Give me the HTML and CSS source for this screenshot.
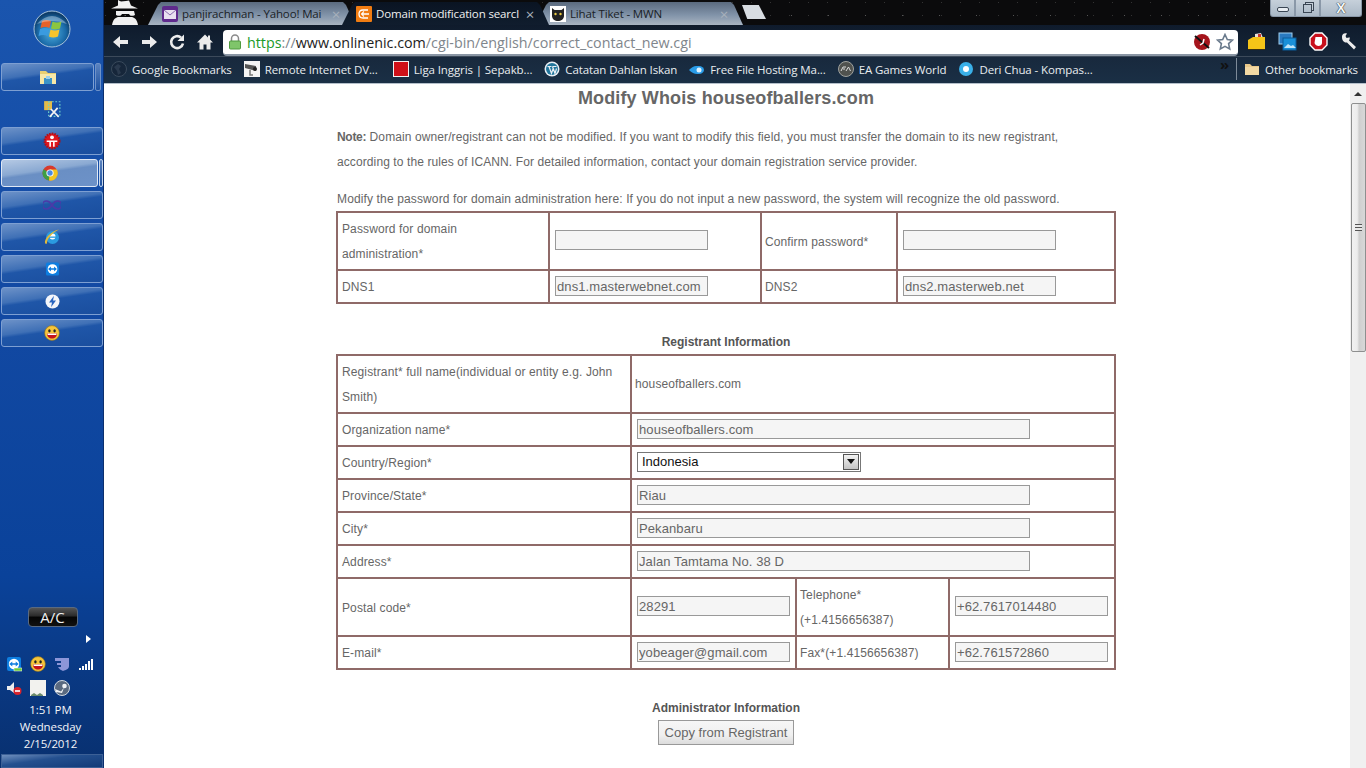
FILE: index.html
```html
<!DOCTYPE html>
<html>
<head>
	<meta charset="UTF-8">
	<title>Lihat Tiket - MWN</title>
	<link rel="stylesheet" href="styles.css">
</head>
<body>
<svg class="defs" width="0" height="0">
	<symbol id="smiley" viewBox="0 0 16 16">
		<circle cx="8" cy="8" r="7.400" fill="#f5c53a" stroke="#8a6a20" stroke-width=".6"/>
		<ellipse cx="5.400" cy="5.800" rx="1.200" ry="1.600" fill="#222"/>
		<ellipse cx="10.600" cy="5.800" rx="1.200" ry="1.600" fill="#222"/>
		<path d="M3 8.600h10c0 3.200-2.200 5-5 5s-5-1.800-5-5z" fill="#c4121c"/>
		<path d="M3.400 8.600h9.200l-.3 1.300H3.700z" fill="#fff"/>
	</symbol>
	<symbol id="teamviewer" viewBox="0 0 16 16">
		<rect x="1" y="1" width="14" height="14" rx="2" fill="#0e7ee0"/>
		<circle cx="8" cy="8" r="5.200" fill="#fff"/>
		<path d="M3.300 8l3-2.600v1.800h3.400V5.400l3 2.600-3 2.600V8.800H6.300v1.800z" fill="#0e7ee0"/>
	</symbol>
</svg>
<div class="desktop">

	<aside class="taskbar">
		<div class="orb">
			<svg width="38" height="38" viewBox="0 0 38 38">
				<defs>
					<radialGradient id="orbfill" cx="50%" cy="60%" r="55%">
						<stop offset="0" stop-color="#4fb0e0"/>
						<stop offset=".7" stop-color="#1a6aa8"/>
						<stop offset="1" stop-color="#0d3c68"/>
					</radialGradient>
				</defs>
				<circle cx="19" cy="19" r="18" fill="url(#orbfill)" stroke="#a9c4dc" stroke-width="1"/>
				<path d="M9 11q4-2 9 0l-1.500 7q-4-2-9 0z" fill="#e8622a"/>
				<path d="M19.500 11.500q4 2 9 0l-1.500 7q-5 2-9 0z" fill="#8cc63f"/>
				<path d="M7 19q4-2 9 0l-1.500 7q-4-2-9 0z" fill="#3a9be0"/>
				<path d="M17.500 19.500q4 2 9 0l-1.500 7q-5 2-9 0z" fill="#f7c42c"/>
				<path d="M4 14Q19-2 34 14 19 8 4 14z" fill="#fff" opacity=".35"/>
			</svg>
		</div>

		<ul class="launch">
			<li class="task open">
				<span class="task-face">
					<svg width="18" height="18" viewBox="0 0 18 18"><path d="M1 3h6l2 2h8v11H1z" fill="#e8cf72"/><rect x="1" y="6" width="16" height="10" fill="#f7e8a8"/><rect x="5" y="10" width="8" height="6" fill="#3b93c8"/><rect x="7" y="8" width="4" height="3" fill="#9ed0ea"/></svg>
				</span>
				<span class="task-sliver"></span>
			</li>
			<li class="task bare">
				<span class="task-face">
					<svg width="18" height="18" viewBox="0 0 16 16"><rect x="1" y="1" width="7" height="8" fill="#e2bc4a"/><rect x="5" y="1.500" width="10" height="13" fill="none" stroke="#6fd0c8" stroke-dasharray="1.500 1.500"/><path d="M6 15l7-8M14 15L7 8" stroke="#f2f2f2" stroke-width="1.500"/></svg>
				</span>
			</li>
			<li class="task">
				<span class="task-face">
					<svg width="18" height="18" viewBox="0 0 17 17"><circle cx="8.500" cy="8.500" r="7" fill="#e01820" stroke="#b01018" stroke-dasharray="1.500 1" stroke-width="2"/><circle cx="8.500" cy="5" r="1.800" fill="#fff"/><path d="M3.500 8h10v1.500h-2.500V14H9.500V9.500h-2V14H6V9.500H3.500z" fill="#fff"/></svg>
				</span>
			</li>
			<li class="task open active">
				<span class="task-face">
					<svg width="16" height="16" viewBox="0 0 16 16"><circle cx="8" cy="8" r="7.500" fill="#d8392c"/><path d="M8 8L1.500 4.200A7.500 7.500 0 0 0 7 15.400z" fill="#3e9e45"/><path d="M8 4.500h6.800a7.500 7.500 0 0 1-7.800 11z" fill="#f3c521"/><circle cx="8" cy="8" r="3.600" fill="#fff"/><circle cx="8" cy="8" r="2.700" fill="#4a8ae0"/></svg>
				</span>
				<span class="task-sliver"></span>
			</li>
			<li class="task">
				<span class="task-face">
					<svg width="18" height="10" viewBox="0 0 18 10"><path d="M9 5C7 2 5 1 3.500 1a4 4 0 0 0 0 8C5 9 7 8 9 5c2-3 4-4 5.500-4a4 4 0 0 1 0 8C13 9 11 8 9 5z" fill="none" stroke="#4a3aa8" stroke-width="1.600"/></svg>
				</span>
			</li>
			<li class="task">
				<span class="task-face">
					<svg width="18" height="18" viewBox="0 0 18 18"><circle cx="9.500" cy="9.500" r="6.500" fill="#2a9be0"/><circle cx="9.500" cy="8.500" r="3" fill="#fff"/><rect x="6" y="8.500" width="8" height="1.300" fill="#2a9be0"/><path d="M2 15C1 11 8 3 16 1.500c-3 1-12 8-12 13 0 2-1.500 1.500-2 .5z" fill="#e2b93a"/></svg>
				</span>
			</li>
			<li class="task">
				<span class="task-face">
					<svg width="15" height="16" viewBox="0 0 16 16"><use href="#teamviewer"/></svg>
				</span>
			</li>
			<li class="task">
				<span class="task-face">
					<svg width="15" height="15" viewBox="0 0 15 15"><circle cx="7.500" cy="7.500" r="7" fill="#f4f6fa"/><path d="M9 1.800L4 8.500h3L6 13.200l5-6.700H8z" fill="#2a66c0"/></svg>
				</span>
			</li>
			<li class="task">
				<span class="task-face">
					<svg width="16" height="16"><use href="#smiley"/></svg>
				</span>
			</li>
		</ul>

		<div class="taskbar-fill"></div>

		<div class="ac-row"><button class="ac-btn">A/C</button></div>
		<div class="tray-arrow"><span></span></div>
		<div class="tray-row">
			<svg width="16" height="16" viewBox="0 0 16 16"><use href="#teamviewer"/><rect x="8" y="12" width="8" height="3" fill="#6ccb3a" stroke="#fff" stroke-width=".5"/></svg>
			<svg width="16" height="16"><use href="#smiley"/></svg>
			<svg width="16" height="16" viewBox="0 0 16 16"><path d="M1 2h14v8c0 3-3 4-6 5-2-1-4-2-5-4h3V9H3V7h4V5H1z" fill="#8c96d8"/></svg>
			<svg width="16" height="16" viewBox="0 0 16 16"><path d="M1 12h2v2H1zM4 10h2v4H4zM7 8h2v6H7zM10 5h2v9h-2zM13 3h2v11h-2z" fill="#fff"/></svg>
		</div>
		<div class="tray-row">
			<svg width="16" height="16" viewBox="0 0 16 16"><path d="M1 6h3l4-4v11L4 10H1z" fill="#eee"/><circle cx="11.500" cy="11" r="4" fill="#d8242c"/><rect x="9" y="10.200" width="5" height="1.600" fill="#fff"/></svg>
			<svg width="16" height="16" viewBox="0 0 16 16"><rect width="16" height="16" fill="#f2f2ee"/><path d="M1 15l3-2 3 2 3-2 3 2v1H1z" fill="#6a8a6a"/></svg>
			<svg width="16" height="16" viewBox="0 0 16 16"><circle cx="8" cy="8" r="7.500" fill="#5a6a80"/><circle cx="8" cy="8" r="7.500" fill="none" stroke="#d0d8e0"/><circle cx="10.500" cy="6" r="2.300" fill="#f0f2f5"/><path d="M1 9l6 2.500 3-4-2 5.500-6-1z" fill="#f0f2f5"/></svg>
		</div>
		<div class="clock">
			<div>1:51 PM</div>
			<div>Wednesday</div>
			<div>2/15/2012</div>
		</div>
		<div class="show-desk"></div>
	</aside>

	<div class="browser">
		<div class="tabstrip">
			<div class="spy">
				<svg width="34" height="25" viewBox="0 0 34 25"><path d="M10 0l3 1.500 5-.5 3-.5 2 5 7 3H3l7-3z" fill="#f0f0f0"/><path d="M8 11h18l1 4c-3 1.500-5 1-6-1h-7c-1 2-3 2.500-6 1z" fill="#f0f0f0"/><path d="M4 25c1-6 4-8 7-8h12c3 0 6 2 7 8z" fill="#f0f0f0"/></svg>
			</div>
			<div class="tab">
				<svg class="fav" width="16" height="16" viewBox="0 0 16 16"><rect width="16" height="16" rx="2" fill="#5f2a8c"/><rect x="2" y="4" width="12" height="9" fill="#e8e0f0"/><path d="M2 4l6 5 6-5" fill="none" stroke="#8a6ab0"/></svg>
				<span class="tab-title">panjirachman - Yahoo! Mai</span>
				<span class="tab-x">×</span>
			</div>
			<div class="tab current">
				<svg class="fav" width="16" height="16" viewBox="0 0 16 16"><rect width="16" height="16" rx="1" fill="#f07c12"/><path d="M12 4H7C4 4 3 6 3 8s1 4 4 4h5M5 8h8M8 5.500c-2 1-2 4 0 5" fill="none" stroke="#fff" stroke-width="1.300"/></svg>
				<span class="tab-title">Domain modification searcl</span>
				<span class="tab-x">×</span>
			</div>
			<div class="tab">
				<svg class="fav" width="16" height="16" viewBox="0 0 16 16"><rect width="16" height="16" fill="#fff"/><path d="M2 2l2.500 2h7L14 2v8c0 3-3 5-6 5s-6-2-6-5z" fill="#222"/><circle cx="5.500" cy="8" r="1.200" fill="#e8c840"/><circle cx="10.500" cy="8" r="1.200" fill="#e8c840"/></svg>
				<span class="tab-title">Lihat Tiket - MWN</span>
				<span class="tab-x">×</span>
			</div>
			<div class="newtab"></div>
			<div class="strip-fill"></div>
			<div class="winbtns">
				<span class="winbtn min"><i class="min-glyph"></i></span>
				<span class="winbtn restore"><i class="restore-glyph"></i></span>
				<span class="winbtn close">X</span>
			</div>
		</div>

		<div class="toolbar">
			<svg class="navicon" width="18" height="18" viewBox="0 0 18 18"><path d="M16 7H8V3L1 9l7 6v-4h8z" fill="#ececec"/></svg>
			<svg class="navicon" width="18" height="18" viewBox="0 0 18 18"><path d="M2 7h8V3l7 6-7 6v-4H2z" fill="#ececec"/></svg>
			<svg class="navicon" width="18" height="18" viewBox="0 0 18 18"><path d="M15 10.500A6 6 0 1 1 13 4.500" fill="none" stroke="#ececec" stroke-width="2.600"/><path d="M16 1.500v6.500h-6.500z" fill="#ececec"/></svg>
			<svg class="navicon" width="18" height="18" viewBox="0 0 18 18"><path d="M9 1.500L1 9.500h2.500V16.500h4v-5h3v5h4V9.500H17l-3-3V2.500h-2v2z" fill="#ececec"/></svg>
			<div class="omnibox">
				<svg class="lock" width="14" height="16" viewBox="0 0 14 16"><path d="M3.500 7V4.500a3.500 3.500 0 0 1 7 0V7" fill="none" stroke="#8a8a8a" stroke-width="1.500"/><rect x="1.500" y="7" width="11" height="8" rx="1" fill="#7fc56a" stroke="#4f9a3e"/></svg>
				<span class="url"><span class="scheme">https</span><span class="sep">://</span><span class="host">www.onlinenic.com</span>/cgi-bin/english/correct_contact_new.cgi</span>
				<svg class="omni-ic" width="18" height="18" viewBox="0 0 18 18"><circle cx="9" cy="9" r="8" fill="#a5151c"/><path d="M2 3l14 12" stroke="#111" stroke-width="2"/><path d="M7 12l3-2 1-4" stroke="#fff" stroke-width="1.500" fill="none"/></svg>
				<svg class="omni-ic" width="18" height="18" viewBox="0 0 18 18"><path d="M9 1.500l2.300 5 5.200.6-3.900 3.500 1.100 5.400L9 13.300 4.300 16l1.100-5.400L1.500 7.100l5.200-.6z" fill="#fff" stroke="#6a7a8c" stroke-width="1.600"/></svg>
			</div>
			<div class="ext">
				<svg width="19" height="19" viewBox="0 0 19 19"><path d="M8 2l6-1 2 5H8z" fill="#e8e0d8"/><rect x="11" y="2" width="3" height="3" fill="#c83a30"/><path d="M1 8l5-3h12v12H1z" fill="#f5c518"/><path d="M1 17h17v1H1z" fill="#3a3010"/></svg>
				<svg width="19" height="19" viewBox="0 0 19 19"><rect x="1" y="1" width="13" height="11" fill="#2a7ac0" stroke="#9fd0f0"/><rect x="5" y="6" width="13" height="12" fill="#1a90d8" stroke="#0a5a98"/><path d="M6 16l4-4 3 2 2-1 3 3z" fill="#bfe4f8"/></svg>
				<svg width="19" height="19" viewBox="0 0 19 19"><path d="M6 1h7l5 5v7l-5 5H6l-5-5V6z" fill="#c8101c" stroke="#fff" stroke-width="1.400"/><path d="M6 8l.5-3h6.500v6c0 2-2 3-3.500 3S6 13 5.500 11z" fill="#fff"/></svg>
				<svg width="19" height="19" viewBox="0 0 19 19"><path d="M2 5c0-3 3-4 5-3L5.500 4.500l1 2 2.500-.5C10 5 10 8 9 9l7 6.500-2 2.500-7-7c-2 .5-5-1-5-5.500z" fill="#ececec" transform="translate(0 -.5)"/></svg>
			</div>
		</div>

		<div class="bookmarks">
			<span class="bm"><svg width="16" height="16" viewBox="0 0 16 16"><circle cx="8" cy="8" r="7.500" fill="#16263a" stroke="#3a4a5c"/><path d="M3 6l4-3 3 2-2 3 2 4-3 2-1-4z" fill="#2a3a4e"/></svg>Google Bookmarks</span>
			<span class="bm bm-gap"><svg width="16" height="16" viewBox="0 0 16 16"><rect width="16" height="16" fill="#f4f4f4"/><path d="M1 3l11 2v5L1 7z" fill="#555"/><circle cx="11" cy="8" r="2" fill="#222"/><path d="M6 9v5h3" stroke="#777" fill="none" stroke-width="1.500"/></svg>Remote Internet DV...</span>
			<span class="bm"><svg width="16" height="16" viewBox="0 0 16 16"><rect width="16" height="16" fill="#f2f2f2"/><rect x="1" y="1" width="14" height="14" fill="#d01018"/></svg>Liga Inggris | Sepakb...</span>
			<span class="bm"><svg width="16" height="16" viewBox="0 0 16 16"><circle cx="8" cy="8" r="7.500" fill="#e8eef4"/><circle cx="8" cy="8" r="6" fill="#21759b"/><path d="M3.500 5.500h4M8.500 5.500h4M5 5.500l2.500 7L9 8M8.500 5.500l2.500 7 1.500-5" stroke="#e8eef4" fill="none" stroke-width="1.200"/></svg>Catatan Dahlan Iskan</span>
			<span class="bm"><svg width="16" height="16" viewBox="0 0 16 16"><path d="M0 9q4-4 7-4h3a5 4 0 0 1 0 8H8Q4 13 0 9z" fill="#2a9ce8"/><circle cx="10" cy="9" r="2.500" fill="#dff2ff"/></svg>Free File Hosting Ma...</span>
			<span class="bm"><svg width="16" height="16" viewBox="0 0 16 16"><circle cx="8" cy="8" r="7.500" fill="#50524f" stroke="#a0a29e"/><path d="M3 10l2-4h3M5 8h2M8 10l2.500-4 2 4" stroke="#ddd" fill="none"/></svg>EA Games World</span>
			<span class="bm"><svg width="16" height="16" viewBox="0 0 16 16"><circle cx="8" cy="8" r="7" fill="#3ab0e8"/><circle cx="8" cy="8" r="3" fill="#fff"/></svg>Deri Chua - Kompas...</span>
			<span class="bm-more">»</span>
			<span class="bm-sep"></span>
			<span class="bm other"><svg width="16" height="16" viewBox="0 0 16 16"><path d="M1 3h5l2 2h7v9H1z" fill="#e8c88a"/><rect x="1" y="6" width="14" height="8" fill="#f2d9a4"/></svg>Other bookmarks</span>
		</div>

		<div class="viewport">
			<main class="page">
				<h1 class="title">Modify Whois houseofballers.com</h1>
				<p class="note"><b>Note:</b> Domain owner/registrant can not be modified. If you want to modify this field, you must transfer the domain to its new registrant, according to the rules of ICANN. For detailed information, contact your domain registration service provider.</p>
				<p class="lead">Modify the password for domain administration here: If you do not input a new password, the system will recognize the old password.</p>

				<table class="form form-pass">
					<colgroup><col class="p1"><col class="p2"><col class="p3"><col class="p4"></colgroup>
					<tr class="tall">
						<td>Password for domain<br>administration*</td>
						<td><input class="field" type="text"></td>
						<td>Confirm password*</td>
						<td><input class="field" type="text"></td>
					</tr>
					<tr>
						<td>DNS1</td>
						<td><input class="field" type="text" value="dns1.masterwebnet.com"></td>
						<td>DNS2</td>
						<td><input class="field" type="text" value="dns2.masterweb.net"></td>
					</tr>
				</table>

				<h2 class="section">Registrant Information</h2>
				<table class="form form-reg">
					<colgroup><col class="r1"><col class="r2"><col class="r3"><col class="r4"></colgroup>
					<tr class="tall">
						<td>Registrant* full name(individual or entity e.g. John Smith)</td>
						<td colspan="3" class="static">houseofballers.com</td>
					</tr>
					<tr>
						<td>Organization name*</td>
						<td colspan="3"><input class="field wide" type="text" value="houseofballers.com"></td>
					</tr>
					<tr>
						<td>Country/Region*</td>
						<td colspan="3">
							<span class="fake-select">Indonesia<span class="select-btn"></span></span>
						</td>
					</tr>
					<tr>
						<td>Province/State*</td>
						<td colspan="3"><input class="field wide" type="text" value="Riau"></td>
					</tr>
					<tr>
						<td>City*</td>
						<td colspan="3"><input class="field wide" type="text" value="Pekanbaru"></td>
					</tr>
					<tr>
						<td>Address*</td>
						<td colspan="3"><input class="field wide" type="text" value="Jalan Tamtama No. 38 D"></td>
					</tr>
					<tr class="tall">
						<td>Postal code*</td>
						<td><input class="field" type="text" value="28291"></td>
						<td>Telephone*<br>(+1.4156656387)</td>
						<td><input class="field" type="text" value="+62.7617014480"></td>
					</tr>
					<tr>
						<td>E-mail*</td>
						<td><input class="field" type="text" value="yobeager@gmail.com"></td>
						<td>Fax*(+1.4156656387)</td>
						<td><input class="field" type="text" value="+62.761572860"></td>
					</tr>
				</table>

				<h2 class="section">Administrator Information</h2>
				<div class="copy-row"><button class="copy-btn">Copy from Registrant</button></div>
			</main>

			<div class="scrollbar">
				<div class="sb-up"><span></span></div>
				<div class="sb-thumb"><span class="sb-grip"></span></div>
			</div>
		</div>
	</div>
</div>
</body>
</html>
```

FILE: styles.css
```css
* {
	box-sizing: border-box;
}
html, body {
	margin: 0;
	height: 100%;
	overflow: hidden;
}
.defs {
	display: block;
	height: 0;
}
.desktop {
	display: flex;
	width: 1366px;
	height: 768px;
	overflow: hidden;
	font-family: "Open Sans", sans-serif;
}

/* left taskbar */
.taskbar {
	width: 104px;
	flex: none;
	display: flex;
	flex-direction: column;
	background: linear-gradient(180deg, #1a55ae 0, #1249a3 40%, #0a429a 75%, #0a3a86 86%, #08306f 100%);
	border-right: 1px solid #0b2f6e;
	color: #f2f4f8;
}
.orb {
	height: 63px;
	display: flex;
	justify-content: center;
	align-items: center;
	padding-bottom: 6px;
}
.launch {
	list-style: none;
	margin: 0;
	padding: 0;
	display: flex;
	flex-direction: column;
	gap: 4px;
}
.task {
	height: 28px;
	display: flex;
	gap: 1px;
	padding-left: 1px;
}
.task-face {
	flex: 1;
	display: flex;
	align-items: center;
	justify-content: center;
	border: 1px solid #7d9fd2;
	border-radius: 3px;
	background: linear-gradient(172deg, #6d92c8 0, #3f70b6 38%, #1f56a8 46%, #1a4e9e 100%);
}
.task-sliver {
	width: 6px;
	border: 1px solid #6f92c8;
	border-radius: 2px;
	background: linear-gradient(180deg, #5b83bf, #1c50a0);
	margin-right: 2px;
}
.task.bare .task-face {
	border-color: transparent;
	background: none;
}
.task.active .task-face {
	border-color: #dfe8f5;
	background: linear-gradient(172deg, #b5c9e4 0, #8aa9d2 40%, #6a8fc4 48%, #6d92c8 100%);
}
.task.active .task-sliver {
	width: 4px;
	margin-right: 0;
	border-color: #c5d5ea;
}
.taskbar-fill {
	flex: 1;
}
.ac-row {
	display: flex;
	justify-content: center;
	padding-left: 2px;
}
.ac-btn {
	width: 50px;
	height: 20px;
	padding: 0;
	border: 1px solid #5a6a80;
	border-radius: 4px;
	background: linear-gradient(180deg, #555 0, #2a2a2a 45%, #050505 50%, #111 100%);
	color: #eee;
	font-family: "Open Sans", sans-serif;
	font-size: 15px;
	line-height: 18px;
}
.tray-arrow {
	display: flex;
	justify-content: flex-end;
	padding: 8px 12px 9px 0;
}
.tray-arrow span {
	border-left: 5px solid #fff;
	border-top: 4px solid transparent;
	border-bottom: 4px solid transparent;
}
.tray-row {
	display: flex;
	gap: 8px;
	padding: 4px 0 4px 6px;
	height: 24px;
}
.tray-row svg {
	flex: none;
}
.clock {
	font-size: 11.5px;
	letter-spacing: -.1px;
	line-height: 17px;
	text-align: center;
	padding-right: 2px;
	margin-top: 1px;
}
.show-desk {
	height: 14px;
	margin: 2px 0 0 1px;
	border: 1px solid #3c6096;
	background: linear-gradient(172deg, #6f8fbe 0, #24508f 40%, #123a78 100%);
}

/* browser frame */
.browser {
	flex: 1;
	min-width: 0;
	display: flex;
	flex-direction: column;
	background: #fff;
}
.tabstrip {
	height: 25px;
	flex: none;
	display: flex;
	align-items: flex-end;
	background-color: #0b0b0c;
	background-image:
		radial-gradient(circle, #555 0, transparent 1px),
		radial-gradient(circle, #333 0, transparent 1px);
	background-size: 37px 23px, 19px 13px;
	background-position: 3px 4px, 11px 9px;
}
.spy {
	width: 44px;
	height: 25px;
	padding-left: 4px;
	flex: none;
	overflow: hidden;
}
.tab {
	width: 207px;
	height: 23px;
	flex: none;
	margin-right: -13px;
	display: flex;
	align-items: center;
	padding-left: 14px;
	color: #1a1e26;
	clip-path: polygon(0 100%, 10px 3px, 13px 0, calc(100% - 12px) 0, calc(100% - 9px) 3px, 100% 100%);
	background: linear-gradient(180deg, #5a6a7e 0, #8092a8 55%, #a8b4c2 100%);
}
.tab.current {
	z-index: 1;
	background: linear-gradient(180deg, #0a1422 0, #101d2e 100%);
	color: #f0f0f0;
}
.tab .fav {
	flex: none;
	margin-right: 4px;
}
.tab-title {
	flex: none;
	width: 149px;
	white-space: nowrap;
	overflow: hidden;
	font-size: 11.500px;
	letter-spacing: -.15px;
}
.tab-x {
	flex: none;
	width: 10px;
	text-align: center;
	color: #a7b0bb;
	font-size: 15px;
	line-height: 16px;
}
.newtab {
	width: 24px;
	height: 14px;
	margin: 0 0 6px 12px;
	background: #d8dde2;
	clip-path: polygon(0 0, 70% 0, 100% 100%, 22% 100%);
	flex: none;
}
.strip-fill {
	flex: 1;
}
.winbtns {
	align-self: flex-start;
	display: flex;
	margin-right: 4px;
	height: 17px;
}
.winbtn {
	display: flex;
	align-items: center;
	justify-content: center;
	width: 25px;
	border: 1px solid #8a98a8;
	border-top: none;
	background: linear-gradient(180deg, #c6d0da, #aab8c6);
}
.winbtn.min {
	border-radius: 0 0 0 3px;
}
.winbtn.close {
	width: 42px;
	border-radius: 0 0 3px 0;
	color: #f2f5f8;
	font-family: "Liberation Sans", Arial, sans-serif;
	font-size: 14px;
	line-height: 14px;
	font-weight: bold;
	text-shadow: 0 0 1px #222, 0 0 1px #222;
}
.min-glyph {
	width: 12px;
	height: 5px;
	border: 1px solid #3a4654;
	border-radius: 2px;
	background: #e8edf2;
	margin-top: 3px;
}
.restore-glyph {
	width: 9px;
	height: 9px;
	border: 1px solid #3a4654;
	box-shadow: 2px -2px 0 -1px #c6d0da, 2px -2px 0 0 #3a4654;
}
.toolbar {
	height: 31px;
	flex: none;
	display: flex;
	align-items: center;
	padding: 2px 6px 0 8px;
	background: linear-gradient(180deg, #0f1b2c 0, #152639 100%);
}
.navicon {
	flex: none;
	margin-right: 10px;
}
.omnibox {
	width: 1015px;
	height: 26px;
	margin: 3px 0 0 -1px;
	flex: none;
	display: flex;
	align-items: center;
	gap: 5px;
	padding: 0 4px 0 5px;
	background: #fff;
	border-radius: 4px;
	border-bottom: 2px solid #8a96a4;
}
.lock {
	flex: none;
}
.url {
	flex: 1;
	font-size: 14.300px;
	color: #80868c;
	white-space: nowrap;
}
.scheme {
	color: #1a9a2a;
}
.sep {
	color: #80868c;
}
.host {
	color: #222;
}
.ext {
	display: flex;
	gap: 12px;
	padding-left: 9px;
}
.bookmarks {
	height: 28px;
	flex: none;
	display: flex;
	align-items: center;
	padding: 0 0 2px 7px;
	background: linear-gradient(180deg, #18293d 0, #1a2f45 100%);
	border-bottom: 1px solid #b4bfca;
	border-top: 1px solid #3c4a5a;
	color: #e9edf0;
	font-size: 11.500px;
	letter-spacing: -.1px;
	white-space: nowrap;
}
.bm {
	display: flex;
	align-items: center;
	gap: 5px;
	margin-right: 12px;
}
.bm.bm-gap {
	margin-right: 15px;
}
.bm svg {
	flex: none;
}
.bm-more {
	margin-left: auto;
	margin-right: 7px;
	color: #111;
	font-size: 15px;
	font-weight: bold;
	line-height: 14px;
	padding-bottom: 10px;
}
.bm-sep {
	width: 1px;
	height: 22px;
	background: #7d8a98;
	margin-right: 7px;
}
.bm.other {
	margin-right: 8px;
}

/* page in the browser */
.viewport {
	flex: 1;
	min-height: 0;
	display: flex;
	overflow: hidden;
}
.page {
	flex: 1;
	min-width: 0;
	padding-right: 2px;
	font-family: "Liberation Sans", Arial, sans-serif;
	font-size: 12px;
	letter-spacing: .12px;
	line-height: 25px;
	color: #666;
	overflow: hidden;
}
.title {
	margin: 2px 0 15px;
	font-size: 18px;
	letter-spacing: .13px;
	line-height: 24px;
	text-align: center;
	color: #666;
}
.note, .lead, .form {
	width: 778px;
	margin-left: auto;
	margin-right: auto;
}
.note {
	margin-top: 0;
	margin-bottom: 12px;
	padding-right: 40px;
	letter-spacing: .1px;
}
.note b {
	letter-spacing: -.3px;
}
.lead {
	margin-top: 0;
	margin-bottom: -1px;
	letter-spacing: .135px;
}
.form {
	border-collapse: collapse;
	table-layout: fixed;
	margin-bottom: 26px;
}
.form td {
	border: 2px solid #8f6a68;
	padding: 4px 4px 2px;
	line-height: 25px;
}
.form td:nth-child(3) {
	padding-left: 3px;
}
.form td.static {
	padding: 3px 4px 3px 3px;
}
.form tr.tall {
	height: 58px;
}
.p1, .p2 { width: 212px; }
.p3 { width: 136px; }
.p4 { width: 218px; }
.r1 { width: 294px; }
.r2 { width: 165px; }
.r3 { width: 153px; }
.r4 { width: 166px; }
.field {
	display: block;
	width: 153px;
	height: 20px;
	margin: 0 0 4px 1px;
	padding: 1px 1px 0;
	border: 1px solid #999;
	background: #f5f5f5;
	color: #666;
	font-family: "Liberation Sans", Arial, sans-serif;
	font-size: 13px;
	letter-spacing: .1px;
}
.field.wide {
	width: 393px;
}
.fake-select {
	display: flex;
	align-items: center;
	justify-content: space-between;
	width: 224px;
	height: 20px;
	margin: 0 0 4px 1px;
	padding: 0 1px 0 4px;
	border: 1px solid #777;
	background: #fff;
	color: #111;
	font-size: 13px;
	letter-spacing: 0;
}
.select-btn {
	display: flex;
	width: 16px;
	height: 16px;
	justify-content: center;
	align-items: center;
	background: linear-gradient(180deg, #f2f2f2, #c4c4c4);
	border: 1px solid #555;
}
.select-btn::after {
	content: "";
	border-top: 5px solid #111;
	border-left: 4px solid transparent;
	border-right: 4px solid transparent;
}
.section {
	margin: 0 auto -1px;
	font-size: 12px;
	letter-spacing: 0;
	line-height: 25px;
	text-align: center;
	color: #555;
}
.copy-row {
	display: flex;
	justify-content: center;
}
.copy-btn {
	width: 136px;
	height: 25px;
	padding: 0;
	border: 1px solid #999;
	background: linear-gradient(180deg, #f6f6f6 0, #f0f0f0 60%, #dcdcdc 100%);
	color: #666;
	font-family: "Liberation Sans", Arial, sans-serif;
	font-size: 13px;
}
.scrollbar {
	width: 16px;
	flex: none;
	background: #f0f0f0;
	display: flex;
	flex-direction: column;
	align-items: center;
}
.sb-up {
	height: 19px;
	display: flex;
	align-items: center;
	justify-content: center;
}
.sb-up span {
	border-bottom: 4px solid #333;
	border-left: 4px solid transparent;
	border-right: 4px solid transparent;
}
.sb-thumb {
	width: 15px;
	height: 249px;
	display: flex;
	align-items: center;
	justify-content: center;
	border: 1px solid #8e8f8f;
	border-radius: 2px;
	background: linear-gradient(90deg, #f1f1f1 0, #ececec 40%, #cfcfcf 55%, #d8d8d8 100%);
}
.sb-grip {
	width: 7px;
	height: 7px;
	background: repeating-linear-gradient(180deg, #555 0, #555 1px, #e8e8e8 1px, #e8e8e8 3px);
}
```
